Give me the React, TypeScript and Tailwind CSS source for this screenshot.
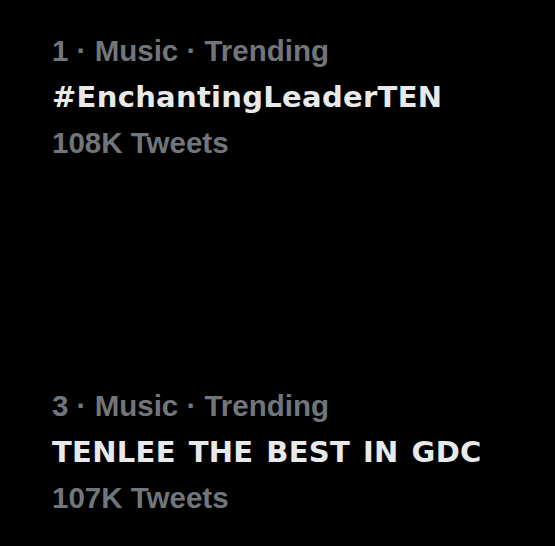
import React from 'react';

type Trend = {
  rank: number;
  category: string;
  title: string;
  count: string;
};

const trends: Trend[] = [
  { rank: 1, category: 'Music', title: '#EnchantingLeaderTEN', count: '108K Tweets' },
  { rank: 3, category: 'Music', title: 'TENLEE THE BEST IN GDC', count: '107K Tweets' },
];

const muted = "font-['Liberation_Sans',Arial,sans-serif] text-[29.5px] font-bold text-[#71767b]";

const TrendItem = ({ trend }: { trend: Trend }) => (
  <div className="flex flex-col leading-[46px]">
    <span className={muted}>
      {trend.rank} · {trend.category} · Trending
    </span>
    <span className="font-['DejaVu_Sans',sans-serif] text-[29px] font-bold tracking-[0.3px] [word-spacing:2.5px] text-[#e7e9ea]">
      {trend.title}
    </span>
    <span className={muted}>{trend.count}</span>
  </div>
);

export default function App() {
  return (
    <div className="w-full h-[546px] bg-black pl-[52px] pt-[28px] flex flex-col gap-[217px] overflow-hidden">
      {trends.map((t) => (
        <TrendItem key={t.rank} trend={t} />
      ))}
    </div>
  );
}
